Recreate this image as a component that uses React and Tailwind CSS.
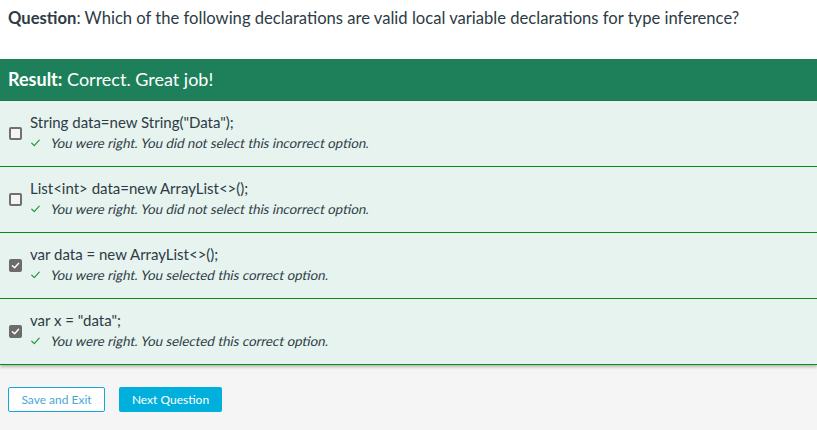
import React from "react";

const options = [
  { text: 'String data=new String("Data");', checked: false, fb: "You were right. You did not select this incorrect option." },
  { text: "List<int> data=new ArrayList<>();", checked: false, fb: "You were right. You did not select this incorrect option." },
  { text: "var data = new ArrayList<>();", checked: true, fb: "You were right. You selected this correct option." },
  { text: 'var x = "data";', checked: true, fb: "You were right. You selected this correct option." },
];

function Box({ checked }) {
  if (checked) {
    return (
      <div className="w-[13px] h-[13px] rounded-[2px] bg-[#6b6b6b] flex items-center justify-center">
        <svg width="9" height="9" viewBox="0 0 10 10" fill="none">
          <path d="M1.5 5.2 L4 7.5 L8.5 2.5" stroke="white" strokeWidth="1.6" strokeLinecap="round" strokeLinejoin="round" />
        </svg>
      </div>
    );
  }
  return <div className="w-[13px] h-[13px] rounded-[2px] border-2 border-[#707070] bg-[#f4f4f4]" />;
}

export default function App() {
  return (
    <div className="w-[817px] h-[430px] bg-[#f5f5f5] font-['Lato',sans-serif] text-[#2d3b45] overflow-hidden">
      <div className="bg-white h-[59px] px-[8px] pt-[7px] text-[16.6px] leading-[22px]">
        <span className="font-bold">Question</span>: Which of the following declarations are valid local variable declarations for type inference?
      </div>
      <div className="h-[42px] bg-[#1e805a] text-white px-[8px] flex items-center text-[18px] border-b border-[#1a7a50]">
        <span className="font-bold">Result:</span>&nbsp;Correct. Great job!
      </div>
      <div className="shadow-[0_2px_3px_rgba(0,0,0,0.25)]">
        {options.map((o, i) => (
          <div key={i} className="h-[66px] bg-[#e6f3ee] border-b border-[#0b8a12] flex items-start pl-[9px] pt-[11px]">
            <div className="w-[21px] flex-none mt-[15px]">
              <Box checked={o.checked} />
            </div>
            <div className="flex flex-col">
              <div className="text-[15px] leading-[20px]">{o.text}</div>
              <div className="flex items-center h-[20px] mt-[1px]">
                <svg width="9" height="8" viewBox="0 0 9 8" fill="none" className="mr-[11px] ml-[1px]">
                  <path d="M0.8 4.2 L3.3 6.6 L8.2 1.2" stroke="#1f9a3a" strokeWidth="1.2" strokeLinecap="round" strokeLinejoin="round" />
                </svg>
                <span className="inline-block -skew-x-12 text-[13.3px] leading-[20px]">{o.fb}</span>
              </div>
            </div>
          </div>
        ))}
      </div>
      <div className="flex gap-[14px] px-[8px] pt-[22px]">
        <button className="w-[97px] h-[25px] bg-white border border-[#14a8d6] rounded-[2px] text-[12px] text-[#4aa8d4] flex items-center justify-center">
          Save and Exit
        </button>
        <button className="w-[103px] h-[25px] bg-[#00afdb] rounded-[2px] text-[12px] text-white flex items-center justify-center">
          Next Question
        </button>
      </div>
    </div>
  );
}
